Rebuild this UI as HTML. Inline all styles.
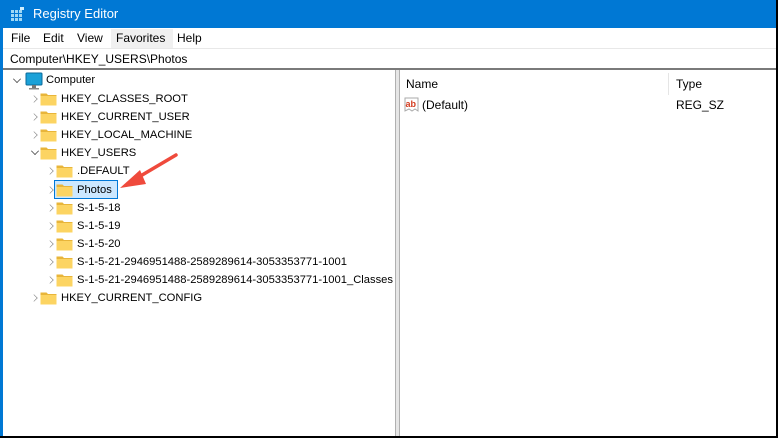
<!DOCTYPE html>
<html><head><meta charset="utf-8"><style>
*{margin:0;padding:0;box-sizing:border-box}
body{width:778px;height:438px;overflow:hidden;background:#fff;font-family:"Liberation Sans",sans-serif;font-size:12px;color:#000;position:relative}
.a{position:absolute;white-space:nowrap}
.title{left:0;top:0;width:778px;height:28px;background:#0078d4;color:#fff;font-size:13px}
.t{font-size:11.2px}
</style></head><body>
<div class="a title">
 <svg class="a" style="left:11px;top:7px" width="14" height="14" viewBox="0 0 14 14"><g fill="#9fd8f5"><rect x="0" y="3" width="3" height="3"/><rect x="4" y="3" width="3" height="3"/><rect x="8" y="3" width="3" height="3"/><rect x="0" y="7" width="3" height="3"/><rect x="4" y="7" width="3" height="3"/><rect x="8" y="7" width="3" height="3"/><rect x="0" y="11" width="3" height="3"/><rect x="4" y="11" width="3" height="3"/><rect x="8" y="11" width="3" height="3"/><rect x="9" y="0" width="4" height="3" fill="#cdeefd"/></g></svg>
 <span class="a" style="left:33px;top:6px">Registry Editor</span>
</div>
<div class="a" style="left:0;top:28px;width:3px;height:410px;background:#0078d4"></div>
<div class="a" style="left:776px;top:0;width:2px;height:438px;background:#000"></div>
<div class="a" style="left:0;top:436px;width:778px;height:2px;background:#000"></div>
<div class="a" style="left:3px;top:28px;width:773px;height:20px;line-height:20px">
 <span class="a" style="left:8px">File</span><span class="a" style="left:40px">Edit</span><span class="a" style="left:74px">View</span>
 <span class="a" style="left:108px;top:1px;width:62px;height:19px;background:#f0f0f0"></span><span class="a" style="left:113px">Favorites</span><span class="a" style="left:174px">Help</span>
</div>
<div class="a" style="left:3px;top:48px;width:773px;height:1px;background:#e8e8e8"></div>
<div class="a" style="left:10px;top:51px;line-height:16px">Computer\HKEY_USERS\Photos</div>
<div class="a" style="left:3px;top:68px;width:773px;height:2px;background:#7a7a7a"></div>
<div class="a" style="left:395px;top:70px;width:1px;height:366px;background:#b0b0b0"></div>
<div class="a" style="left:396px;top:70px;width:3px;height:366px;background:#e6e6e6"></div>
<div class="a" style="left:399px;top:70px;width:1px;height:366px;background:#b0b0b0"></div>
<div class="a" style="left:668px;top:73px;width:1px;height:22px;background:#e5e5e5"></div>
<div class="a" style="left:406px;top:76px;line-height:16px">Name</div>
<div class="a" style="left:676px;top:76px;line-height:16px">Type</div>
<svg class="a" style="left:404px;top:97px" width="16" height="16" viewBox="0 0 16 16"><path d="M1 1h13v13l-3-2-3 2-3-2-4 2z" fill="#fff" stroke="#aaa"/><text x="1.5" y="10" font-size="9" font-weight="bold" fill="#d33b1f" font-family="Liberation Sans">ab</text></svg>
<div class="a" style="left:422px;top:97px;line-height:16px">(Default)</div>
<div class="a" style="left:676px;top:97px;line-height:16px">REG_SZ</div>

<div class="a" style="left:13px;top:75px;width:8px;height:8px;border-right:1.5px solid #333;border-bottom:1.5px solid #333;transform:rotate(45deg) scale(.7)"></div>
<svg class="a" style="left:25px;top:72px" width="18" height="18" viewBox="0 0 18 18"><rect x="1" y="1" width="16" height="12" rx="1" fill="#1ba1d8" stroke="#0b6a9a"/><rect x="7" y="13" width="4" height="3" fill="#777"/><rect x="4" y="16" width="10" height="1.5" fill="#888"/></svg>
<div class="a t" style="left:46px;top:72px;line-height:16px">Computer</div>
<div id="tree"></div>

<svg class="a" style="left:0;top:0" width="778" height="438"><path d="M176 155 L132 181" stroke="#ef4a3c" stroke-width="3.5" stroke-linecap="round"/><path d="M120 188 L140 170 L146 184 Z" fill="#ef4a3c"/></svg>
<script>
var rows=[[1,"HKEY_CLASSES_ROOT",0],[1,"HKEY_CURRENT_USER",0],[1,"HKEY_LOCAL_MACHINE",0],[1,"HKEY_USERS",1],[2,".DEFAULT",0],[2,"Photos",2],[2,"S-1-5-18",0],[2,"S-1-5-19",0],[2,"S-1-5-20",0],[2,"S-1-5-21-2946951488-2589289614-3053353771-1001",0],[2,"S-1-5-21-2946951488-2589289614-3053353771-1001_Classes",0],[1,"HKEY_CURRENT_CONFIG",0]];
var h="";
rows.forEach(function(r,i){
 var y=Math.round(90+i*18.1);var x0=r[0]==1?31:47;
 if(r[2]==1) h+='<div class="a" style="left:'+(x0)+'px;top:'+(y+3)+'px;width:8px;height:8px;border-right:1.5px solid #333;border-bottom:1.5px solid #333;transform:rotate(45deg) scale(.7)"></div>';
 else h+='<div class="a" style="left:'+(x0-1)+'px;top:'+(y+5)+'px;width:8px;height:8px;border-right:1.3px solid #888;border-bottom:1.3px solid #888;transform:rotate(-45deg) scale(.65)"></div>';
 var fx=x0+9;
 if(r[2]==2) h+='<div class="a" style="left:'+(fx-2)+'px;top:'+(y-1)+'px;width:64px;height:19px;background:#cce8ff;border:1px solid #0078d7"></div>';
 h+='<svg class="a" style="left:'+fx+'px;top:'+(y+2)+'px" width="17" height="14" viewBox="0 0 17 14"><path d="M0.5 1.5h6l1.5 1.5h8.5v10h-16z" fill="#e8b53a"/><path d="M0.5 4h16v9.5h-16z" fill="#fcd462"/></svg>';
 h+='<div class="a t" style="left:'+(fx+21)+'px;top:'+y+'px;line-height:18px">'+r[1]+'</div>';
});
document.getElementById("tree").innerHTML=h;
</script>
</body></html>
